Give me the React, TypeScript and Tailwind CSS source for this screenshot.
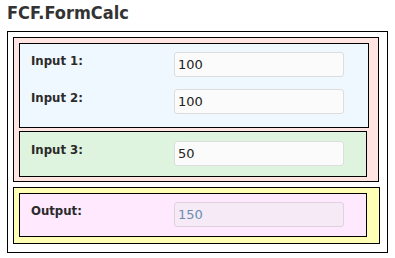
export default function App() {
  const font = { fontFamily: '"DejaVu Sans Condensed", "DejaVu Sans", Verdana, sans-serif' };

  return (
    <div className="bg-white w-[395px] h-[258px] text-[#333]" style={font}>
      <h1 className="pl-[7px] pt-[2px] h-[31px] text-[18px] leading-[21px] font-bold text-[#333]">
        FCF.FormCalc
      </h1>
      <div className="ml-[7px] w-[381px] h-[222px] border border-black pl-[5px] pt-[5px]">
        <div className="w-[366px] h-[145px] border border-black bg-[#ffe4e1] pl-[5px] pt-[5px]">
          <div className="w-[350px] h-[85px] border border-black bg-[#f0f8ff] pl-[11px] pt-[8px] flex flex-col gap-[11px]">
            <Row label="Input 1:" value="100" />
            <Row label="Input 2:" value="100" />
          </div>
          <div className="mt-[3px] w-[348px] h-[46px] border border-black bg-[#dff4de] pl-[11px] pt-[9px]">
            <Row label="Input 3:" value="50" />
          </div>
        </div>
        <div className="mt-[5px] w-[367px] h-[57px] border border-black bg-[#ffffb5] pl-[5px] pt-[5px]">
          <div className="w-[348px] h-[44px] border border-black bg-[#ffe9ff] pl-[11px] pt-[8px]">
            <Row label="Output:" value="150" disabled />
          </div>
        </div>
      </div>
    </div>
  );
}

function Row({ label, value, disabled }: { label: string; value: string; disabled?: boolean }) {
  return (
    <div className="flex items-start h-[26px]">
      <label className="w-[143px] pt-[1px] text-[13px] leading-[16px] font-bold text-[#2a2a2a]">
        {label}
      </label>
      <input
        readOnly
        disabled={disabled}
        defaultValue={value}
        className={
          disabled
            ? 'w-[170px] h-[25px] px-[3px] rounded-[3px] border border-[#dcd3dc] bg-[#f5eaf5] text-[13px] text-[#6a8db3] outline-none'
            : 'w-[170px] h-[25px] px-[3px] rounded-[3px] border border-[#dddddd] bg-[#fbfbfb] text-[13px] text-[#222] outline-none'
        }
        style={{ fontFamily: '"DejaVu Sans", Verdana, sans-serif' }}
      />
    </div>
  );
}
